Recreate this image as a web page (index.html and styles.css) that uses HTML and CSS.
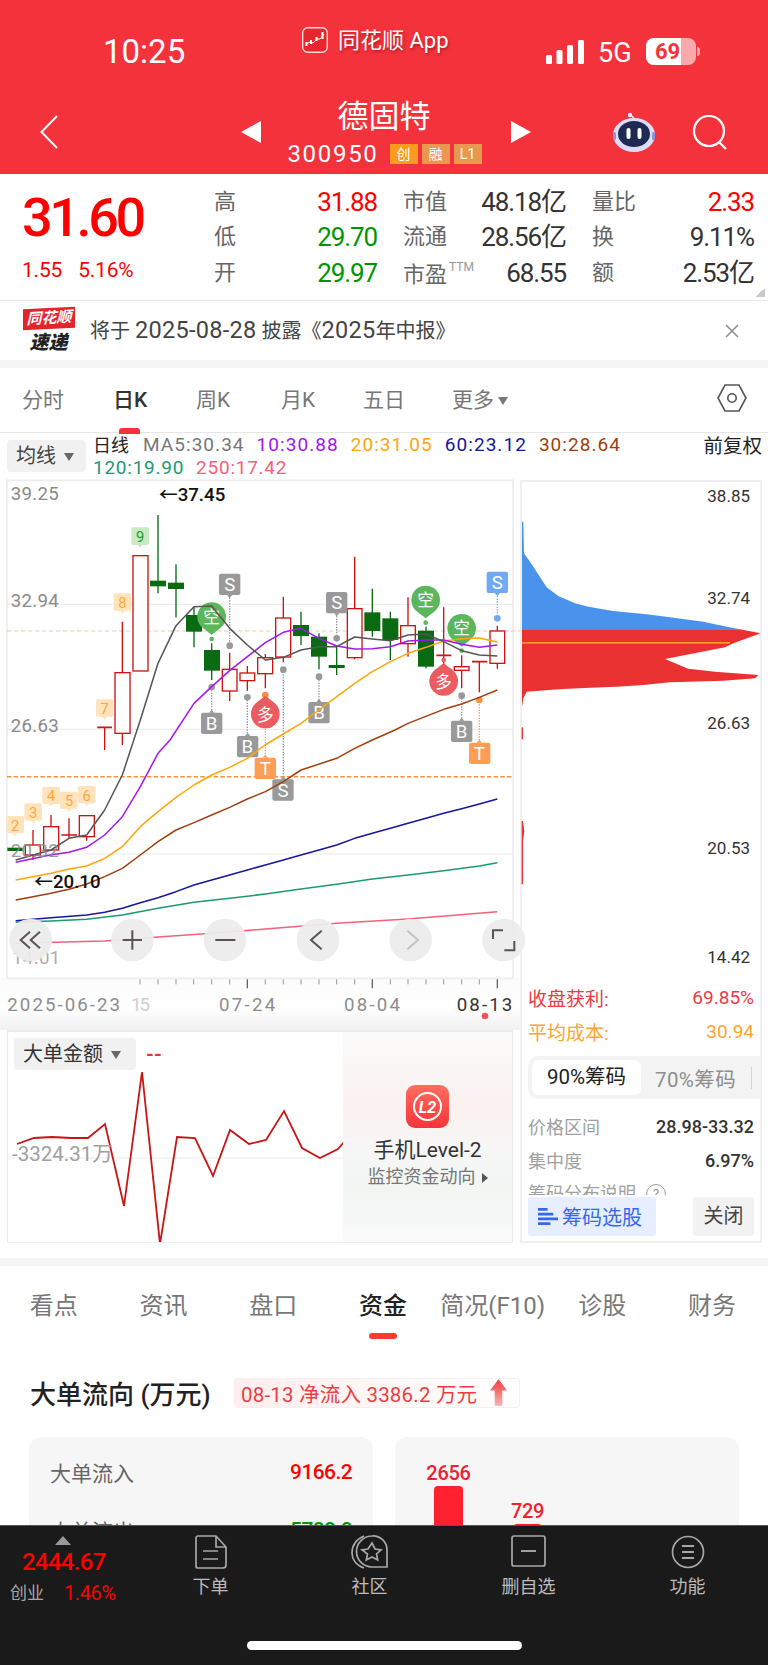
FILE: index.html
```html
<!DOCTYPE html>
<html lang="zh-CN">
<head>
<meta charset="utf-8">
<title>德固特 300950</title>
<link rel="stylesheet" href="styles.css">
</head>
<body>
<div class="page">

  <header class="hero">
    <div class="status">
      <div class="clock">10:25</div>
      <div class="source">
        <svg class="app-icon" viewBox="0 0 26 26"><rect x="0.7" y="0.7" width="24.6" height="24.6" rx="5" fill="#e8262e" stroke="#ffd9d9" stroke-width="1.4"/><path d="M4 17l4-2 3 1 4-4 3 0 4-5" fill="none" stroke="#fff" stroke-width="1"/><rect x="3.5" y="15" width="2" height="4" fill="#fff"/><rect x="8" y="13" width="2" height="4" fill="#fff"/><rect x="13.5" y="10" width="2" height="4" fill="#fff"/><rect x="19.5" y="5" width="2" height="7" fill="#fff"/></svg>
        <span>同花顺 App</span>
      </div>
      <div class="signals">
        <svg class="bars" viewBox="0 0 38 24"><rect x="0" y="15" width="6" height="9" rx="1.5"/><rect x="10.5" y="10" width="6" height="14" rx="1.5"/><rect x="21" y="5" width="6" height="19" rx="1.5"/><rect x="32" y="0" width="6" height="24" rx="1.5"/></svg>
        <span class="net">5G</span>
        <span class="battery"><span class="battery-fill"></span><span class="battery-num">69</span></span>
        <span class="battery-cap"></span>
      </div>
    </div>
    <div class="nav">
      <svg class="back" viewBox="0 0 18 34"><path d="M17 1L1.5 17 17 33" fill="none" stroke="#fff" stroke-width="2"/></svg>
      <svg class="tri tri-prev" viewBox="0 0 20 22"><path d="M20 0v22L0 11z" fill="#fff"/></svg>
      <div class="stock">
        <div class="stock-name">德固特</div>
        <div class="stock-code">
          <span class="code">300950</span>
          <span class="chip chip-a">创</span><span class="chip chip-b">融</span><span class="chip chip-b">L1</span>
        </div>
      </div>
      <svg class="tri" viewBox="0 0 20 22"><path d="M0 0v22l20-11z" fill="#fff"/></svg>
      <svg class="robot" viewBox="0 0 44 40"><circle cx="18" cy="3" r="2.2" fill="#e9e4ff"/><path d="M18 4q4 0 4 4" fill="none" stroke="#e9e4ff" stroke-width="1.5"/><ellipse cx="22" cy="23" rx="21" ry="17" fill="#dcdcf6"/><rect x="1" y="20" width="3" height="8" rx="1.5" fill="#8f93d8"/><rect x="40" y="20" width="3" height="8" rx="1.5" fill="#8f93d8"/><ellipse cx="22" cy="22" rx="16" ry="13" fill="#1f2a52"/><rect x="14.5" y="16" width="4" height="11" rx="2" fill="#fff"/><rect x="25.5" y="16" width="4" height="11" rx="2" fill="#fff"/></svg>
      <svg class="search" viewBox="0 0 35 35"><circle cx="16" cy="16" r="15" fill="none" stroke="#fff" stroke-width="2.2"/><path d="M26 27l7 7" stroke="#fff" stroke-width="2.2"/></svg>
    </div>
  </header>

  <section class="quote">
    <div class="price-col">
      <div class="price">31.60</div>
      <div class="delta"><span>1.55</span><span>5.16%</span></div>
    </div>
    <div class="quote-grid">
      <span class="q-label">高</span><span class="q-val up">31.88</span>
      <span class="q-label">市值</span><span class="q-val">48.18亿</span>
      <span class="q-label">量比</span><span class="q-val up">2.33</span>
      <span class="q-label">低</span><span class="q-val down">29.70</span>
      <span class="q-label">流通</span><span class="q-val">28.56亿</span>
      <span class="q-label">换</span><span class="q-val">9.11%</span>
      <span class="q-label">开</span><span class="q-val down">29.97</span>
      <span class="q-label q-low">市盈<sup class="ttm">TTM</sup></span><span class="q-val">68.55</span>
      <span class="q-label">额</span><span class="q-val">2.53亿</span>
    </div>
    <span class="corner"></span>
  </section>

  <section class="notice">
    <div class="brand">
      <span class="brand-top">同花顺</span>
      <span class="brand-bottom">速递</span>
    </div>
    <p class="notice-text">将于 <span class="num">2025-08-28</span> 披露《<span class="num">2025</span>年中报》</p>
    <svg class="notice-close" viewBox="0 0 14 14"><path d="M1 1l12 12M13 1L1 13" stroke="#8f8f8f" stroke-width="1.6"/></svg>
  </section>

  <nav class="periods">
    <span>分时</span>
    <span class="period-on">日K</span>
    <span>周K</span>
    <span>月K</span>
    <span>五日</span>
    <span class="period-more">更多<i class="caret"></i></span>
    <svg class="hex" viewBox="0 0 30 28"><path d="M8 1h14l7 13-7 13H8L1 14z" fill="none" stroke="#555" stroke-width="1.6"/><circle cx="15" cy="14" r="4.2" fill="none" stroke="#555" stroke-width="1.6"/></svg>
  </nav>

  <section class="chart-head">
    <div class="ma-button">均线<i class="caret caret-dark"></i></div>
    <div class="legend">
      <div class="legend-row">
        <span class="legend-day">日线</span>
        <span class="c-gray">MA5:30.34</span>
        <span class="c-purple">10:30.88</span>
        <span class="c-orange">20:31.05</span>
        <span class="c-navy">60:23.12</span>
        <span class="c-brown">30:28.64</span>
        <span class="adjust">前复权</span>
      </div>
      <div class="legend-row legend-row-second">
        <span class="c-green">120:19.90</span>
        <span class="c-pink">250:17.42</span>
      </div>
    </div>
  </section>

  <section class="workspace">
    <div class="left-col">
      <svg class="kline" viewBox="0 150 1560 1650" width="520" height="550">
        <defs>
          <linearGradient id="axisBg" x1="0" y1="0" x2="0" y2="1"><stop offset="0" stop-color="#fbfbfb"/><stop offset="0.55" stop-color="#fff"/><stop offset="1" stop-color="#f1f1f1"/></linearGradient>
        </defs>
        <rect x="0" y="1645" width="1560" height="155" fill="url(#axisBg)"/>
        <rect x="21" y="151" width="1518" height="1494" fill="#fff" stroke="#ececec" stroke-width="5"/>

        <!-- price grid -->
        <g stroke="#e6e6e6" stroke-width="2.5">
          <path d="M21 523H1539M21 898H1539M21 1272H1539"/>
        </g>
        <path d="M21 603H1560" stroke="#e5cdb4" stroke-width="3.5" stroke-dasharray="13 8"/>
        <path d="M21 1040H1539" stroke="#fb8f3a" stroke-width="4.5" stroke-dasharray="13 7"/>

        <!-- axis scale -->
        <g class="scale">
          <text x="32" y="210">39.25</text>
          <text x="32" y="530">32.94</text>
          <text x="32" y="905">26.63</text>
        </g>

        <!-- hollow rising candles -->
        <g stroke="#d01212" stroke-width="4" fill="#fff">
          <path d="M99 1200V1290M153 1155V1260M207 1165V1225M260 1220V1232M314 892V960M367 575V945M689 668V813M742 708V782M796 672V775M850 500V697M1064 380V688M1224 502V680M1331 532V710M1385 676V775M1438 695V787M1492 587V716" fill="none"/>
          <path d="M184 1215H231M292 892H336M1309 676H1354M1416 695H1462" fill="none" stroke-width="5"/>
          <rect x="76" y="1245" width="45" height="30"/>
          <rect x="131" y="1190" width="45" height="70"/>
          <rect x="238" y="1157" width="45" height="63"/>
          <rect x="345" y="728" width="45" height="182"/>
          <rect x="399" y="377" width="45" height="346"/>
          <rect x="667" y="718" width="44" height="65"/>
          <rect x="720" y="729" width="44" height="23"/>
          <rect x="773" y="683" width="45" height="48"/>
          <rect x="827" y="564" width="45" height="117"/>
          <rect x="1042" y="536" width="44" height="147"/>
          <rect x="1202" y="587" width="44" height="54"/>
          <rect x="1363" y="710" width="44" height="11"/>
          <rect x="1470" y="603" width="44" height="97"/>
        </g>

        <!-- solid falling candles -->
        <g fill="#0a6a12">
          <path d="M22 1253H68V1263H22Z"/>
          <rect x="472" y="255" width="4" height="235"/>
          <rect x="526" y="403" width="4" height="159"/>
          <rect x="580" y="530" width="4" height="122"/>
          <rect x="633" y="640" width="4" height="110"/>
          <rect x="901" y="545" width="4" height="100"/>
          <rect x="955" y="610" width="4" height="108"/>
          <rect x="1008" y="650" width="4" height="85"/>
          <rect x="1115" y="476" width="4" height="144"/>
          <rect x="1169" y="545" width="4" height="145"/>
          <rect x="1276" y="590" width="4" height="125"/>
          <rect x="450" y="452" width="48" height="17"/>
          <rect x="504" y="458" width="48" height="19"/>
          <rect x="558" y="555" width="48" height="50"/>
          <rect x="612" y="660" width="48" height="62"/>
          <rect x="879" y="585" width="48" height="33"/>
          <rect x="933" y="620" width="48" height="60"/>
          <rect x="986" y="705" width="48" height="9"/>
          <rect x="1093" y="547" width="48" height="56"/>
          <rect x="1147" y="565" width="48" height="65"/>
          <rect x="1254" y="602" width="48" height="108"/>
        </g>

        <!-- sequence counters -->
        <g class="count">
          <g fill="#ffe3bd">
            <rect x="19" y="1158" width="53" height="52" rx="5"/><path d="M38 1210h14l-7 9z"/>
            <rect x="73" y="1120" width="53" height="52" rx="5"/><path d="M92 1172h14l-7 9z"/>
            <rect x="127" y="1070" width="53" height="52" rx="5"/><path d="M146 1122h14l-7 9z"/>
            <rect x="180" y="1085" width="53" height="52" rx="5"/><path d="M199 1137h14l-7 9z"/>
            <rect x="234" y="1068" width="53" height="52" rx="5"/><path d="M253 1120h14l-7 9z"/>
            <rect x="288" y="808" width="52" height="52" rx="5"/><path d="M307 860h14l-7 9z"/>
            <rect x="341" y="490" width="52" height="53" rx="5"/><path d="M360 543h14l-7 9z"/>
          </g>
          <rect x="394" y="292" width="53" height="53" rx="5" fill="#c9eac5"/><path d="M413 345h14l-7 9z" fill="#c9eac5"/>
          <g fill="#ffa63d">
            <text x="45" y="1202">2</text><text x="99" y="1164">3</text><text x="153" y="1114">4</text><text x="207" y="1129">5</text><text x="260" y="1112">6</text><text x="314" y="852">7</text><text x="367" y="535">8</text>
          </g>
          <text x="420" y="337" fill="#1c9c1c">9</text>
        </g>

        <!-- trade marks and their leader lines -->
        <g stroke-dasharray="4 4" stroke-width="4" fill="none">
          <path d="M689 495V640M1010 550V620M850 725V1050M635 780V850M742 810V920M957 750V820M1385 805V875" stroke="#999"/>
          <path d="M1492 490V555" stroke="#6ea9f2"/>
          <path d="M796 800V985M1438 815V940" stroke="#fb9a52"/>
        </g>
        <g fill="#999">
          <circle cx="689" cy="647" r="10"/><circle cx="1010" cy="625" r="10"/><circle cx="850" cy="719" r="10"/>
          <circle cx="635" cy="771" r="10"/><circle cx="742" cy="802" r="10"/><circle cx="957" cy="740" r="10"/><circle cx="1385" cy="797" r="10"/>
        </g>
        <circle cx="1492" cy="565" r="10" fill="#6ea9f2"/>
        <circle cx="796" cy="795" r="10" fill="#fb8f3a"/><circle cx="1438" cy="810" r="10" fill="#fb8f3a"/>

        <g class="mark" fill="#999">
          <rect x="657" y="431" width="64" height="64" rx="6"/><path d="M681 495h16l-8 9z"/>
          <rect x="978" y="486" width="64" height="64" rx="6"/><path d="M1002 550h16l-8 9z"/>
          <rect x="817" y="1048" width="64" height="64" rx="6"/><path d="M842 1048h16l-8-9z"/>
          <rect x="603" y="848" width="64" height="64" rx="6"/><path d="M627 848h16l-8-9z"/>
          <rect x="711" y="918" width="64" height="64" rx="6"/><path d="M735 918h16l-8-9z"/>
          <rect x="925" y="816" width="64" height="64" rx="6"/><path d="M949 816h16l-8-9z"/>
          <rect x="1353" y="872" width="64" height="64" rx="6"/><path d="M1377 872h16l-8-9z"/>
        </g>
        <g fill="#70aaf2"><rect x="1460" y="425" width="64" height="64" rx="6"/><path d="M1484 489h16l-8 9z"/></g>
        <g fill="#ff9d57">
          <rect x="764" y="983" width="64" height="64" rx="6"/><path d="M788 983h16l-8-9z"/>
          <rect x="1407" y="938" width="64" height="64" rx="6"/><path d="M1430 938h16l-8-9z"/>
        </g>
        <g class="mark-text" fill="#fff">
          <text x="689" y="483">S</text><text x="1010" y="538">S</text><text x="849" y="1100">S</text>
          <text x="635" y="900">B</text><text x="742" y="970">B</text><text x="957" y="868">B</text><text x="1385" y="924">B</text>
          <text x="1492" y="477">S</text>
          <text x="796" y="1035">T</text><text x="1438" y="990">T</text>
        </g>

        <!-- long/short bubbles -->
        <g fill="#5cb75c">
          <circle cx="635" cy="560" r="43"/><path d="M610 595h50l-25 20z"/>
          <circle cx="1277" cy="510" r="43"/><path d="M1252 545h50l-25 20z"/>
          <circle cx="1385" cy="595" r="43"/><path d="M1360 630h50l-25 20z"/>
        </g>
        <g fill="#eb5b5f">
          <circle cx="796" cy="852" r="43"/><path d="M771 817h50l-25-20z"/>
          <circle cx="1331" cy="754" r="43"/><path d="M1306 719h50l-25-20z"/>
        </g>
        <circle cx="635" cy="627" r="7" fill="#5cb75c"/><circle cx="1277" cy="578" r="7" fill="#5cb75c"/><circle cx="1385" cy="662" r="7" fill="#5cb75c"/>
        <circle cx="1331" cy="690" r="7" fill="#eb5b5f"/>
        <g class="bubble-text" fill="#fff">
          <text x="635" y="578">空</text><text x="1277" y="528">空</text><text x="1385" y="613">空</text>
          <text x="796" y="872">多</text><text x="1331" y="774">多</text>
        </g>

        <!-- moving averages -->
        <g fill="none" stroke-width="4.5" stroke-linejoin="round">
          <polyline stroke="#f5607a" points="47,1540 314,1533 421,1525 528,1517 635,1510 796,1497 1010,1480 1224,1467 1492,1445"/>
          <polyline stroke="#1d9a6c" points="47,1477 153,1473 260,1468 367,1455 474,1435 582,1417 689,1405 796,1392 903,1377 1010,1363 1117,1347 1224,1335 1331,1322 1438,1308 1492,1298"/>
          <polyline stroke="#1616a0" points="47,1472 153,1463 260,1455 314,1447 367,1435 421,1418 474,1403 528,1385 582,1365 635,1350 689,1335 742,1320 796,1305 850,1290 903,1275 957,1260 1010,1245 1064,1225 1117,1210 1171,1195 1224,1180 1278,1165 1331,1150 1385,1136 1438,1122 1492,1107"/>
          <polyline stroke="#a23f0c" points="47,1410 99,1400 153,1390 207,1378 260,1362 314,1340 367,1315 421,1275 474,1235 528,1200 582,1178 635,1155 689,1132 742,1107 796,1085 850,1055 903,1020 1010,985 1064,955 1117,930 1185,900 1224,880 1331,838 1385,822 1438,802 1492,780"/>
          <polyline stroke="#ffa608" points="47,1350 153,1330 207,1317 260,1308 314,1285 367,1250 421,1190 474,1145 528,1102 582,1065 635,1035 689,1012 742,985 795,945 870,900 903,880 957,840 1010,800 1064,760 1117,725 1171,695 1224,670 1278,652 1331,633 1385,626 1438,624 1492,636"/>
          <polyline stroke="#a416f2" points="47,1297 150,1275 207,1267 260,1252 314,1215 367,1160 421,1070 474,970 510,930 582,820 635,770 689,722 742,680 796,638 850,607 903,595 957,625 1010,648 1064,657 1117,656 1171,650 1224,633 1278,630 1331,630 1385,643 1438,652 1492,645"/>
          <polyline stroke="#555" points="47,1290 153,1260 207,1225 260,1215 314,1140 367,1035 421,870 474,700 528,587 582,530 635,528 689,595 742,645 796,690 850,682 903,660 957,650 1010,650 1064,621 1117,627 1171,632 1224,615 1278,612 1331,635 1385,662 1438,675 1492,678"/>
        </g>

        <g class="extreme">
          <text x="477" y="213">←37.45</text>
          <text x="103" y="1375">←20.10</text>
        </g>
        <g class="scale">
          <text x="32" y="1282" opacity="0.85">20.32</text>
          <text x="36" y="1603" opacity="0.7">14.01</text>
        </g>

        <!-- chart toolbar -->
        <g fill="#ececec" fill-opacity="0.94">
          <circle cx="92" cy="1530" r="64"/><circle cx="397" cy="1530" r="64"/><circle cx="675" cy="1530" r="64"/>
          <circle cx="954" cy="1530" r="64"/><circle cx="1232" cy="1530" r="64"/><circle cx="1511" cy="1530" r="64"/>
        </g>
        <g fill="none" stroke="#555" stroke-width="6">
          <path d="M90 1505l-28 25 28 25M120 1505l-28 25 28 25"/>
          <path d="M368 1530h58M397 1501v58"/>
          <path d="M646 1530h60"/>
          <path d="M965 1502l-32 28 32 28"/>
          <path d="M1222 1502l32 28-32 28" stroke="#c4c4c4"/>
          <path d="M1479 1527v-26h30M1543 1533v28h-30"/>
        </g>

        <!-- time axis -->
        <g stroke="#999" stroke-width="3" fill="none">
          <path d="M420 1648v15M474 1648v15M528 1648v15M581 1648v15M635 1648v15M689 1648v15M796 1648v15M850 1648v15M903 1648v15M957 1648v15M1010 1648v15M1064 1648v15M1171 1648v15M1224 1648v15M1278 1648v15M1331 1648v15M1385 1648v15M1438 1648v15"/>
          <path d="M742 1648v27M1117 1648v27M1492 1648v27" stroke="#666" stroke-width="4"/>
        </g>
        <g class="dates">
          <text x="22" y="1742" textLength="338" fill="#8d8d8d">2025-06-23</text>
          <text x="393" y="1742" textLength="57" fill="#cfcfcf">15</text>
          <text x="657" y="1742" textLength="169" fill="#8d8d8d">07-24</text>
          <text x="1032" y="1742" textLength="168" fill="#8d8d8d">08-04</text>
          <text x="1370" y="1742" textLength="167" fill="#333">08-13</text>
        </g>
        <circle cx="1455" cy="1758" r="10" fill="#f2545b"/>
      </svg>

      <div class="flow-panel">
        <div class="flow-select">大单金额<i class="caret caret-dark"></i></div>
        <span class="flow-dash">--</span>
        <svg class="flow-line" viewBox="0 0 506 213" width="506" height="213">
          <path d="M0 126H506" stroke="#ececec" stroke-width="1.2"/>
          <polyline fill="none" stroke="#c81414" stroke-width="1.8" points="9,112 26,106 44,105 63,106 80,106 97,92 116,174 134,40 152,212 169,105 187,106 205,144 222,98 241,112 258,108 276,79 294,116 312,126 330,117 336,110"/>
          <text class="flow-axis" x="4" y="129">-3324.31万</text>
        </svg>
        <div class="l2-promo">
          <svg class="l2-icon" viewBox="0 0 43 43"><defs><linearGradient id="l2Bg" x1="0" y1="0" x2="0" y2="1"><stop offset="0" stop-color="#ff6d5f"/><stop offset="1" stop-color="#f6343a"/></linearGradient></defs><rect width="43" height="43" rx="9" fill="url(#l2Bg)"/><circle cx="21.5" cy="21.5" r="13.5" fill="none" stroke="#fff" stroke-width="2"/><text x="21.5" y="27.5" class="l2-mark">L2</text></svg>
          <div class="l2-title">手机Level-2</div>
          <div class="l2-sub">监控资金动向<i class="play"></i></div>
        </div>
      </div>
    </div>

    <aside class="right-col">
      <svg class="profile" viewBox="30 30 726 1494" width="242" height="498">
        <polygon fill="#4a93ec" points="36,155 40,155 42,250 70,290 110,352 145,378 195,400 235,410 310,423 410,433 480,442 580,455 640,468 690,478 36,478"/>
        <polygon fill="#e93131" points="36,478 690,478 752,490 670,520 645,532 465,567 520,590 535,596 615,605 745,615 735,625 640,632 480,637 400,645 320,650 240,653 160,657 115,660 50,665 40,685 36,712"/>
        <rect x="35" y="772" width="4" height="36" fill="#e93131"/>
        <polygon fill="#e93131" points="35,1053 39,1053 43,1085 39,1110 39,1243 35,1243"/>
        <rect x="36" y="516" width="624" height="5" fill="#ff9d1e"/>
        <g class="profile-scale">
          <text x="720" y="97">38.85</text>
          <text x="720" y="402">32.74</text>
          <text x="720" y="777">26.63</text>
          <text x="720" y="1152">20.53</text>
          <text x="720" y="1479">14.42</text>
        </g>
      </svg>

      <div class="cost">
        <div class="cost-row cost-red"><span>收盘获利:</span><span>69.85%</span></div>
        <div class="cost-row cost-orange"><span>平均成本:</span><span>30.94</span></div>
        <div class="segment">
          <span class="segment-on">90%筹码</span>
          <span class="segment-off">70%筹码</span>
          <i class="segment-bar"></i>
        </div>
        <div class="cost-row cost-plain first"><span>价格区间</span><b>28.98-33.32</b></div>
        <div class="cost-row cost-plain"><span>集中度</span><b>6.97%</b></div>
        <div class="cost-clip"><span>筹码分布说明</span><i class="help">?</i></div>
        <div class="cost-actions">
          <div class="pick">
            <svg viewBox="0 0 22 22" class="pick-icon"><path d="M0 2h10v3H0zM0 7h16v3H0zM0 12h21v3H0zM0 17h13v3H0z" fill="#3568ee"/></svg>
            筹码选股
          </div>
          <div class="close-btn">关闭</div>
        </div>
      </div>
    </aside>
  </section>

  <div class="band"></div>

  <nav class="topics">
    <span>看点</span><span>资讯</span><span>盘口</span>
    <span class="topic-on">资金</span>
    <span>简况(F10)</span><span>诊股</span><span>财务</span>
  </nav>

  <section class="capital">
    <div class="capital-head">
      <h2>大单流向 (万元)</h2>
      <div class="net-pill">08-13 净流入 3386.2 万元
        <svg viewBox="0 0 20 28" class="net-arrow"><defs><linearGradient id="arrowFade" x1="0" y1="0" x2="0" y2="1"><stop offset="0" stop-color="#ee3c3c"/><stop offset="1" stop-color="#f9b3b3"/></linearGradient></defs><path d="M10 0l9 12h-5v16H6V12H1z" fill="url(#arrowFade)"/></svg>
      </div>
    </div>
    <div class="capital-cards">
      <div class="card card-list">
        <div class="card-row"><span>大单流入</span><b class="up">9166.2</b></div>
        <div class="card-row"><span>大单流出</span><b class="down">5780.0</b></div>
      </div>
      <div class="card card-bars">
        <div class="bar-col bar-a"><span>2656</span><i></i></div>
        <div class="bar-col bar-b"><span>729</span><i></i></div>
      </div>
    </div>
  </section>

  <footer class="dock">
    <div class="dock-row">
      <div class="index">
        <i class="index-tri"></i>
        <div class="index-val">2444.67</div>
        <div class="index-sub"><span>创业</span><b>1.46%</b></div>
      </div>
      <div class="dock-item">
        <svg viewBox="0 0 32 34" width="32" height="34"><path d="M3 1h18l10 11v18a3 3 0 0 1-3 3H3a2 2 0 0 1-2-2V3a2 2 0 0 1 2-2zM21 1v11h10M8 16h15M8 24h15" fill="none" stroke="#a8a8a8" stroke-width="1.7"/></svg>
        <span>下单</span>
      </div>
      <div class="dock-item">
        <svg viewBox="0 0 37 34" width="37" height="34"><path d="M13 1C4 5 1 12 1 18s4 12 12 15" fill="none" stroke="#a8a8a8" stroke-width="1.7"/><path d="M21 1a14 14 0 0 1 15 14v17H21A15.500 15.500 0 0 1 21 1z" fill="none" stroke="#a8a8a8" stroke-width="1.7"/><path d="M21 8l3 6 6 .8-4.500 4.200 1.200 6-5.700-3-5.700 3 1.200-6L11 14.800l6-.8z" fill="none" stroke="#a8a8a8" stroke-width="1.7"/></svg>
        <span>社区</span>
      </div>
      <div class="dock-item">
        <svg viewBox="0 0 35 32" width="35" height="32"><rect x="1" y="1" width="33" height="30" rx="2" fill="none" stroke="#a8a8a8" stroke-width="1.7"/><path d="M10 16h15" stroke="#a8a8a8" stroke-width="1.9"/></svg>
        <span>删自选</span>
      </div>
      <div class="dock-item">
        <svg viewBox="0 0 34 34" width="34" height="34"><circle cx="17" cy="17" r="15.500" fill="none" stroke="#a8a8a8" stroke-width="1.7"/><path d="M11 11h12M11 17h12M11 23h12" stroke="#a8a8a8" stroke-width="1.9"/></svg>
        <span>功能</span>
      </div>
    </div>
    <div class="home-bar"></div>
  </footer>
</div>
</body>
</html>
```

FILE: styles.css
```css
* { box-sizing: border-box; margin: 0; padding: 0; }

html, body { width: 768px; height: 1665px; overflow: hidden; background: #fff; }

body {
  font-family: Roboto, "Noto Sans CJK SC", sans-serif;
  color: #333;
}

.page { position: relative; width: 768px; height: 1665px; overflow: hidden; }

i { display: inline-block; font-style: normal; }

/* red title block */
.hero { height: 174px; background: #f4323c; color: #fff; }

.status {
  height: 90px;
  display: grid;
  grid-template-columns: 302px 244px 1fr;
}

.clock {
  padding: 36px 0 0 103px;
  font-size: 33px;
  line-height: 32px;
  white-space: nowrap;
}

.source {
  display: flex;
  align-items: flex-start;
  gap: 10px;
  padding-top: 27px;
  font-size: 22px;
  line-height: 28px;
  text-shadow: 1px 2px 3px rgba(90, 0, 0, 0.45);
  white-space: nowrap;
}

.app-icon { width: 26px; height: 26px; flex: none; }

.signals {
  display: flex;
  align-items: flex-start;
  padding-top: 38px;
}

.bars { width: 38px; height: 24px; margin-top: 2px; fill: #fff; }

.net { margin: 0 0 0 14px; font-size: 27px; line-height: 30px; width: 48px; }

.battery {
  position: relative;
  width: 50px;
  height: 27px;
  border-radius: 8px;
  background: #f8a9ac;
  overflow: hidden;
}

.battery-fill { position: absolute; left: 0; top: 0; bottom: 0; width: 35px; background: #fff; }

.battery-num {
  position: absolute;
  left: 9px;
  top: 0;
  font-size: 22px;
  line-height: 27px;
  font-weight: 700;
  color: #f4323c;
}

.battery-cap {
  width: 3px;
  height: 9px;
  margin: 9px 0 0 1px;
  border-radius: 0 3px 3px 0;
  background: #f8a9ac;
}

.nav { display: flex; align-items: center; height: 84px; }

.back { width: 18px; height: 34px; margin-left: 40px; }

.tri { width: 20px; height: 22px; }

.tri-prev { margin-left: 183px; }

.stock { width: 250px; text-align: center; padding-top: 1px; }

.stock-name { font-size: 31px; line-height: 38px; margin: 0 0 5px -4px; }

.stock-code {
  display: flex;
  justify-content: center;
  align-items: center;
  height: 26px;
  gap: 4px;
  margin-left: -3px;
}

.code { font-size: 24px; letter-spacing: 1.7px; margin-right: 7px; }

.chip {
  width: 28px;
  height: 20px;
  font-size: 14px;
  line-height: 20px;
  color: #fff;
  text-align: center;
}

.chip-a { background: #ff9b1e; }
.chip-b { background: #e8984f; }

.robot { width: 44px; height: 40px; margin-left: 81px; }

.search { width: 35px; height: 35px; margin-left: 37px; }

/* quote summary */
.quote {
  position: relative;
  display: flex;
  height: 127px;
  border-bottom: 1px solid #e8e8e8;
}

.price-col { width: 214px; padding: 16px 0 0 22px; color: #f00; }

.price { font-size: 54px; line-height: 56px; font-weight: 500; letter-spacing: -3.4px; }

.delta { display: flex; gap: 16px; margin-top: 11px; font-size: 21px; line-height: 26px; letter-spacing: -0.2px; }

.quote-grid {
  display: grid;
  grid-template-columns: 30px 133px 26px 46px 117px 26px 46px 116px;
  grid-auto-rows: 35.5px;
  padding-top: 10px;
  align-items: center;
}

.q-label { font-size: 22px; line-height: 28px; color: #666; white-space: nowrap; }

.q-label:nth-child(6n+1) { grid-column: 1; }
.q-label:nth-child(6n+3) { grid-column: 4; }
.q-label:nth-child(6n+5) { grid-column: 7; }

.q-val { text-align: right; font-size: 26px; line-height: 28px; white-space: nowrap; color: #333; letter-spacing: -1.1px; }

.q-val.up, b.up { color: #f00; }
.q-val.down, b.down { color: #009600; }

.q-val:nth-child(6n+2) { grid-column: 2; }
.q-val:nth-child(6n+4) { grid-column: 5; }
.q-val:nth-child(6n+6) { grid-column: 8; }

.q-low { padding-top: 4px; }

.ttm { font-size: 12px; line-height: 12px; vertical-align: 11px; color: #999; margin-left: 2px; }

.corner {
  position: absolute;
  right: 3px;
  bottom: 3px;
  width: 9px;
  height: 9px;
  background: linear-gradient(135deg, transparent 50%, #c9c9c9 50%);
}

/* announcement strip */
.notice {
  display: flex;
  align-items: center;
  height: 59px;
  padding-left: 22px;
  border-bottom: 0;
}

.brand { width: 53px; display: flex; flex-direction: column; align-items: center; }

.brand-top {
  width: 52px;
  height: 21px;
  background: #e4232b;
  color: #fff;
  font-size: 15px;
  line-height: 21px;
  font-weight: 700;
  font-style: italic;
  text-align: center;
  white-space: nowrap;
  transform: skewY(-3deg);
}

.brand-bottom {
  margin-top: 2px;
  font-size: 19px;
  line-height: 23px;
  font-weight: 900;
  font-style: italic;
  color: #222;
}

.notice-text { margin-left: 15px; width: 635px; font-size: 20px; line-height: 28px; color: #444; white-space: nowrap; }

.notice-text .num { font-size: 23.5px; letter-spacing: 0.3px; }

.notice-close { width: 14px; height: 14px; }

/* period switcher */
.periods {
  display: grid;
  grid-template-columns: 91px 83px 85px 82px 89px 1fr auto;
  align-items: center;
  height: 73px;
  padding: 0 21px 4px 22px;
  border-top: 8px solid #f5f5f5;
  border-bottom: 1px solid #e6e6e6;
  font-size: 21px;
  color: #777;
}

.period-on { position: relative; color: #333; font-weight: 500; }

.period-on::after {
  content: "";
  position: absolute;
  left: 6px;
  bottom: -21px;
  width: 21px;
  height: 6px;
  border-radius: 3px 3px 0 0;
  background: #f4323c;
}

.period-more { white-space: nowrap; }

.caret {
  width: 0;
  height: 0;
  margin-left: 4px;
  vertical-align: 2px;
  border: 5.5px solid transparent;
  border-top: 8px solid #777;
  border-bottom: 0;
}

.caret-dark { border-top-color: #666; margin-left: 8px; }

.hex { width: 30px; height: 28px; }

/* moving-average header */
.chart-head { display: flex; height: 47px; padding: 7px 6px 0 7px; }

.ma-button {
  width: 79px;
  height: 32px;
  border-radius: 4px;
  background: #f1f1f1;
  padding-left: 9px;
  font-size: 20px;
  line-height: 32px;
  color: #444;
  white-space: nowrap;
}

.legend { flex: 1; margin: -8px 0 0 7px; }

.legend-row {
  display: flex;
  height: 24px;
  align-items: center;
  gap: 12px;
  font-size: 19px;
  letter-spacing: 1.05px;
  white-space: nowrap;
}

.legend-row-second { height: 23px; letter-spacing: 0.75px; }

.legend-day { color: #222; letter-spacing: 0; font-size: 18px; margin-right: 2px; }

.adjust { margin-left: auto; color: #222; letter-spacing: 0; font-size: 19.5px; }

.c-gray { color: #777; }
.c-purple { color: #a416f2; }
.c-orange { color: #ffa608; }
.c-navy { color: #1616a0; }
.c-brown { color: #a23f0c; }
.c-green { color: #1d9a6c; }
.c-pink { color: #f5607a; }

/* chart and chip columns */
.workspace { display: grid; grid-template-columns: 520px 242px; height: 763px; }

.left-col { display: flex; flex-direction: column; }

.kline { display: block; overflow: visible; }

.kline text, .profile text { font-family: Roboto, "Noto Sans CJK SC", sans-serif; }

.scale text { font-size: 56px; fill: #8a8a8a; letter-spacing: 1px; }

.count text { font-size: 44px; text-anchor: middle; }

.mark-text text { font-size: 56px; text-anchor: middle; }

.bubble-text text { font-size: 50px; text-anchor: middle; }

.extreme text { font-size: 56px; fill: #111; font-weight: 500; }

.dates text { font-size: 56px; }

.flow-panel {
  position: relative;
  width: 506px;
  height: 213px;
  margin-left: 7px;
  border: 1px solid #ececec;
  border-top-width: 2px;
  overflow: hidden;
}

.flow-line { position: absolute; left: 0; top: 0; }

.flow-select {
  position: absolute;
  left: 6px;
  top: 6px;
  width: 122px;
  height: 32px;
  padding-left: 9px;
  border-radius: 4px;
  background: #f1f1f1;
  font-size: 20px;
  line-height: 32px;
  color: #333;
  z-index: 1;
  white-space: nowrap;
}

.flow-dash { position: absolute; left: 138px; top: 9px; font-size: 20px; line-height: 26px; font-weight: 700; color: #e2383c; z-index: 1; }

.flow-axis { font-family: Roboto, "Noto Sans CJK SC", sans-serif; font-size: 20.5px; fill: #a0a0a0; }

.l2-promo {
  position: absolute;
  left: 335px;
  top: 0;
  right: 0;
  bottom: 0;
  display: flex;
  flex-direction: column;
  align-items: center;
  padding-top: 53px;
  background: linear-gradient(180deg, #fbfbfb 0%, #fbf1f1 35%, #f7f6f6 55%, #f1f6f3 75%, #fafafa 100%);
}

.l2-icon { width: 43px; height: 43px; }

.l2-mark { font-family: Roboto, sans-serif; font-size: 16px; font-weight: 700; font-style: italic; fill: #fff; text-anchor: middle; }

.l2-title { margin-top: 8px; font-size: 21px; line-height: 28px; color: #333; white-space: nowrap; }

.l2-sub { margin-top: 0; font-size: 18px; line-height: 26px; color: #777; white-space: nowrap; }

.play {
  width: 0;
  height: 0;
  margin-left: 6px;
  border-left: 6px solid #555;
  border-top: 5px solid transparent;
  border-bottom: 5px solid transparent;
}

.right-col {
  display: flex;
  flex-direction: column;
  border: 2px solid #efefef;
  height: 763px;
}

.profile { display: block; margin: -2px 0 0 -2px; flex: none; overflow: visible; }

.profile-scale text { font-size: 51px; fill: #333; text-anchor: end; }

.cost { padding: 2px 6px 0 6px; }

.cost-row {
  display: flex;
  justify-content: space-between;
  align-items: center;
  height: 34px;
  font-size: 19px;
  white-space: nowrap;
}

.cost-red { color: #ee3a42; }
.cost-orange { color: #ffa42c; }

.cost-plain { font-size: 18px; color: #a0a0a0; }
.cost-plain b { font-weight: 500; font-size: 18px; color: #333; }
.first { margin-top: 10px; }

.segment {
  display: flex;
  align-items: center;
  height: 43px;
  margin-top: 8px;
  margin-right: -6px;
  padding-left: 4px;
  border-radius: 10px 0 0 10px;
  background: #f3f3f3;
  font-size: 20.5px;
}

.segment-on {
  width: 109px;
  height: 35px;
  border-radius: 7px;
  background: #fff;
  text-align: center;
  line-height: 35px;
  color: #222;
}

.segment-off { margin-left: 14px; color: #8d8d8d; letter-spacing: 0.4px; }

.segment-bar { width: 1px; height: 22px; margin-left: 15px; background: #d5d5d5; }

.cost-clip {
  display: flex;
  align-items: center;
  gap: 10px;
  height: 18px;
  overflow: hidden;
  font-size: 18px;
  line-height: 34px;
  color: #a0a0a0;
}

.cost-clip span { padding-top: 16px; }

.help {
  width: 20px;
  height: 20px;
  margin-top: 16px;
  border: 1.5px solid #999;
  border-radius: 50%;
  text-align: center;
  font-size: 13px;
  line-height: 17px;
  color: #999;
  flex: none;
}

.cost-actions { display: flex; justify-content: space-between; margin-top: 2px; }

.pick {
  display: flex;
  align-items: center;
  gap: 3px;
  width: 128px;
  height: 39px;
  padding-left: 10px;
  border-radius: 3px;
  background: #e6eeff;
  font-size: 20px;
  color: #3568ee;
  white-space: nowrap;
}

.pick-icon { width: 21px; height: 21px; flex: none; }

.close-btn {
  width: 61px;
  height: 39px;
  border-radius: 3px;
  background: #f2f2f2;
  font-size: 20px;
  line-height: 39px;
  text-align: center;
  color: #444;
}

.band { height: 8px; margin-top: 15px; background: #f5f5f5; }

/* detail tabs */
.topics {
  display: grid;
  grid-template-columns: repeat(7, 109.7px);
  justify-items: center;
  height: 74px;
  margin-left: -1px;
  padding-top: 23px;
  font-size: 24px;
  line-height: 34px;
  color: #777;
}

.topics span { white-space: nowrap; }

.topic-on { position: relative; color: #222; font-weight: 500; }

.topic-on::after {
  content: "";
  position: absolute;
  left: 10px;
  right: 10px;
  top: 44px;
  height: 6px;
  border-radius: 3px;
  background: #ff3b30;
}

/* large-order section */
.capital { padding: 38px 29px 0 29px; }

.capital-head { display: flex; align-items: center; height: 29px; }

.capital-head h2 { width: 205px; padding-left: 1px; font-size: 26px; font-weight: 500; color: #222; white-space: nowrap; }

.net-pill {
  display: flex;
  align-items: center;
  width: 286px;
  height: 30px;
  padding-left: 6px;
  border: 1px solid #fdeeee;
  border-radius: 3px;
  background: linear-gradient(90deg, #ffeeee, #ffffff);
  font-size: 20.5px;
  color: #ee3c42;
  white-space: nowrap;
  letter-spacing: 0.2px;
}

.net-arrow { width: 19px; height: 27px; margin-left: 12px; flex: none; }

.capital-cards { display: grid; grid-template-columns: 344px 344px; gap: 22px; margin-top: 30px; }

.card { height: 200px; border-radius: 12px; background: #f6f6f6; }

.card-list { padding: 6px 21px 0; }

.card-row {
  display: flex;
  justify-content: space-between;
  align-items: center;
  height: 58px;
  font-size: 21px;
  color: #666;
}

.card-row b { font-size: 21px; font-weight: 500; letter-spacing: -0.6px; }

.card-bars { display: flex; align-items: flex-start; padding-left: 39px; gap: 50px; }

.bar-col { width: 29px; display: flex; flex-direction: column; align-items: center; }

.bar-col span { font-size: 20px; line-height: 26px; color: #f02030; font-weight: 500; letter-spacing: -0.3px; }

.bar-col i { width: 29px; height: 120px; border-radius: 4px 4px 0 0; background: #ff2030; margin-top: 0; }

.bar-a { margin-top: 23px; }
.bar-b { margin-top: 61px; }

/* bottom dock */
.dock {
  position: absolute;
  left: 0;
  right: 0;
  bottom: 0;
  height: 140px;
  border-top: 1px solid #555;
  background: #1a1a1a;
}

.dock-row {
  display: grid;
  grid-template-columns: 131px repeat(4, 159px);
  height: 115px;
}

.index { position: relative; padding-top: 10px; color: #f00; }

.index-tri {
  display: block;
  width: 0;
  height: 0;
  margin-left: 55px;
  border-left: 8px solid transparent;
  border-right: 8px solid transparent;
  border-bottom: 9px solid #999;
}

.index-val { margin: 2px 0 0 22px; font-size: 24px; line-height: 30px; font-weight: 500; letter-spacing: -0.7px; }

.index-sub { display: flex; align-items: center; gap: 20px; margin: 2px 0 0 10px; line-height: 28px; }

.index-sub span { font-size: 17px; color: #a8a8a8; }

.index-sub b { font-size: 20px; font-weight: 400; letter-spacing: -0.4px; }

.dock-item {
  display: flex;
  flex-direction: column;
  align-items: center;
  padding-top: 9px;
  color: #bcbcbc;
  font-size: 18px;
  line-height: 26px;
}

.dock-item svg { flex: none; }

.dock-item span { margin-top: 5px; }

.dock-item:nth-child(4) span { margin-top: 7px; }

.home-bar { width: 275px; height: 9px; margin: 0 auto; border-radius: 5px; background: #fff; }
```
